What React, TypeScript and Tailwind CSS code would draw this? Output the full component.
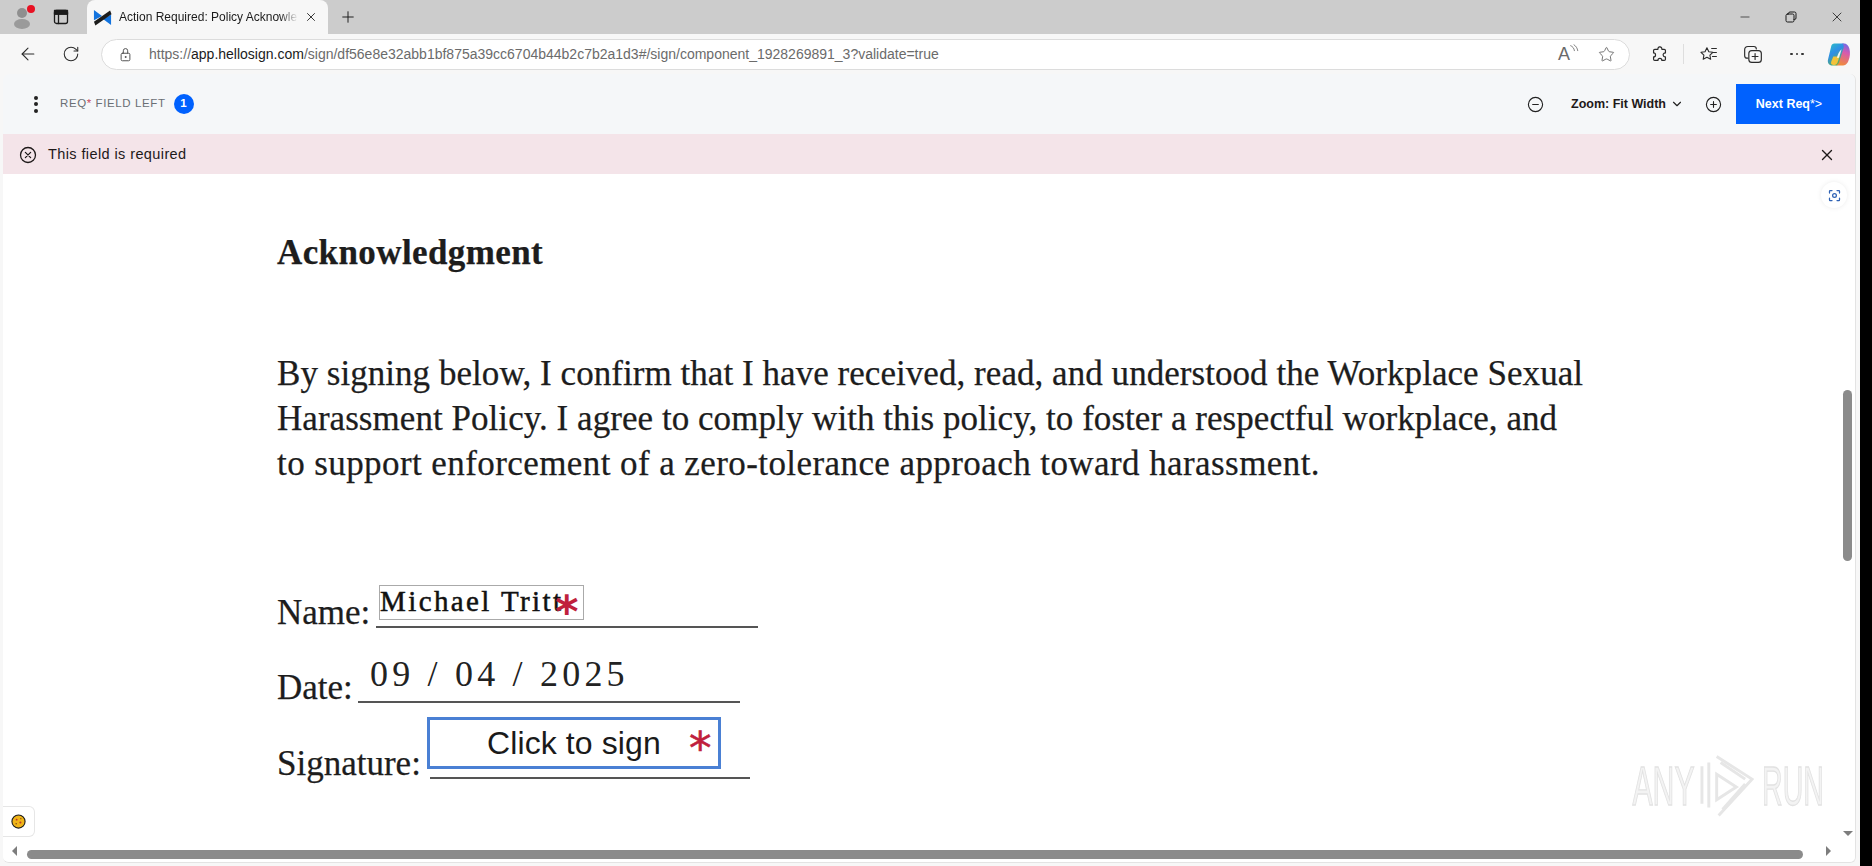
import React from "react";
import { ArrowLeft, RotateCw, X, Plus, ChevronDown, Star, Minus } from "lucide-react";

const Ic = ({ className = "", children, vb = "0 0 24 24", sw = 1.5 }: { className?: string; children: React.ReactNode; vb?: string; sw?: number }) => (
  <svg viewBox={vb} fill="none" stroke="currentColor" strokeWidth={sw} strokeLinecap="round" strokeLinejoin="round" className={className}>
    {children}
  </svg>
);

const Cambria = "font-['Liberation_Serif',serif]";

function TabStrip() {
  return (
    <div className="flex h-[34px] items-end bg-[#cccccc] font-['Liberation_Sans',sans-serif] text-[#1b1b1b]">
      <div className="relative flex h-[34px] w-[44px] shrink-0 items-center justify-center">
        <svg viewBox="0 0 24 24" className="h-[24px] w-[24px]">
          <circle cx="12" cy="8" r="5" fill="#8f8f8f" />
          <ellipse cx="12" cy="19" rx="8" ry="5" fill="#9a9a9a" />
        </svg>
        <span className="absolute left-[27px] top-[5px] h-[8px] w-[8px] rounded-full bg-[#e81123]" />
      </div>
      <div className="flex h-[34px] w-[43px] shrink-0 items-center justify-start pl-[9px]">
        <Ic className="h-[16px] w-[16px]" vb="0 0 16 16" sw={1.3}>
          <rect x="1.5" y="1.5" width="13" height="13" rx="2" />
          <path d="M1.5 5h13M5.5 5v9.5" />
          <path d="M1.5 1.5h13V5h-13z" fill="currentColor" />
        </Ic>
      </div>
      <div className="flex h-[34px] w-[241px] shrink-0 items-center rounded-t-[8px] bg-[#f7f7f7] pl-[6px] pr-[10px]">
        <svg viewBox="0 0 20 20" className="h-[19px] w-[19px] shrink-0">
          <path d="M1 2 L9.500 8.500 L1 13 Z" fill="#1273de" />
          <path d="M19 18 L10.500 11.500 L19 7 Z" fill="#1273de" />
          <path d="M1 14.500 L18 2.500 L19.500 6.500 L2.500 18.500 Z" fill="#1c1c1c" />
        </svg>
        <span className="ml-[7px] w-[179px] whitespace-nowrap text-[12px] leading-[14px] [mask-image:linear-gradient(to_right,#000_90%,transparent)]">
          Action Required: Policy Acknowle
        </span>
        <X className="ml-auto h-[14px] w-[14px]" strokeWidth={1.5} />
      </div>
      <div className="flex h-[34px] w-[40px] shrink-0 items-center justify-center">
        <Plus className="h-[18px] w-[18px]" strokeWidth={1.3} />
      </div>
      <div className="flex h-[34px] flex-1 items-center justify-end">
        <div className="flex h-full w-[46px] items-center justify-center"><Minus className="h-[14px] w-[14px]" strokeWidth={1.2} /></div>
        <div className="flex h-full w-[46px] items-center justify-center">
          <Ic className="h-[12px] w-[12px]" vb="0 0 12 12" sw={1}>
            <rect x="1" y="3" width="8" height="8" rx="1.5" />
            <path d="M3.5 3V2.5A1.5 1.5 0 0 1 5 1h4.5A1.5 1.5 0 0 1 11 2.5V7a1.5 1.5 0 0 1-1.5 1.5H9" />
          </Ic>
        </div>
        <div className="flex h-full w-[46px] items-center justify-center"><X className="h-[16px] w-[16px]" strokeWidth={1.2} /></div>
      </div>
    </div>
  );
}

function Toolbar() {
  return (
    <div className="flex h-[40px] items-center bg-[#f7f7f7] text-[#2b2b2b]">
      <div className="flex w-[101px] shrink-0 items-center pl-[18px]">
        <ArrowLeft className="h-[20px] w-[20px]" strokeWidth={1.3} />
        <RotateCw className="ml-[24px] h-[18px] w-[18px]" strokeWidth={1.4} />
      </div>
      <div className="flex h-[31px] w-[1529px] shrink-0 items-center rounded-full border border-[#dcdcdc] bg-white">
        <Ic className="ml-[16px] h-[15px] w-[15px] text-[#555]" sw={1.6}>
          <rect x="5" y="10" width="14" height="12" rx="2" />
          <path d="M8.5 10V6a3.5 3.5 0 0 1 7 0v4" />
          <circle cx="12" cy="16" r="0.8" fill="currentColor" />
        </Ic>
        <span className="ml-[16px] whitespace-nowrap font-['Liberation_Sans',sans-serif] text-[14px] text-[#6b6b6b]">
          https://<span className="text-[#1b1b1b]">app.hellosign.com</span>/sign/df56e8e32abb1bf875a39cc6704b44b2c7b2a1d3#/sign/component_1928269891_3?validate=true
        </span>
        <span className="ml-auto mr-[14px] flex items-center text-[#6a6a6a]">
          <span className="relative flex h-[20px] w-[22px] items-center font-['Liberation_Sans',sans-serif] text-[18px] leading-none">
            A
            <Ic className="absolute left-[11px] top-[0px] h-[10px] w-[10px]" sw={2}>
              <path d="M4 4c5 2 8 6 9 12M12 2c5 3 8 8 9 14" />
            </Ic>
          </span>
          <Star className="ml-[18px] h-[17px] w-[17px]" strokeWidth={1.3} />
        </span>
      </div>
      <div className="flex flex-1 items-center">
        <Ic className="ml-[20px] h-[19px] w-[19px]" sw={1.5}>
          <path d="M10 4.500a2.500 2.500 0 0 1 4.500-1.200c.5.8.5 1.200.5 2.200h3c1 0 1.500.5 1.500 1.500v3c-1 0-1.800.2-2.400 1a2.400 2.400 0 0 0 0 3c.6.8 1.400 1 2.400 1v3c0 1-.5 1.500-1.500 1.500h-3c0-1.200-.5-2.500-2.500-2.500s-2.500 1.300-2.500 2.500H6c-1 0-1.500-.5-1.500-1.500v-3c1.200 0 2.500-.5 2.500-2.500S5.700 10 4.500 10V7c0-1 .5-1.500 1.500-1.500h4z" />
        </Ic>
        <span className="ml-[14px] h-[20px] w-px bg-[#dedede]" />
        <Ic className="ml-[15px] h-[19px] w-[19px]" sw={1.4}>
          <path d="M10 3.500l2.400 5 5.100.7-3.700 3.600.9 5.200-4.700-2.500-4.700 2.500.9-5.200L2.500 9.200l5.100-.7z" />
          <path d="M16 4.500h6M18 9.500h4M17 14.500h5" />
        </Ic>
        <Ic className="ml-[25px] h-[20px] w-[20px]" sw={1.4}>
          <path d="M6 17H5a3 3 0 0 1-3-3V7a4 4 0 0 1 4-4h7a3 3 0 0 1 3 3" />
          <rect x="7" y="8" width="15" height="14" rx="3.500" />
          <path d="M14.500 11.500v7M11 15h7" />
        </Ic>
        <span className="ml-[27px] flex items-center gap-[3px]">
          <span className="h-[2.500px] w-[2.500px] rounded-full bg-[#333]" />
          <span className="h-[2.500px] w-[2.500px] rounded-full bg-[#333]" />
          <span className="h-[2.500px] w-[2.500px] rounded-full bg-[#333]" />
        </span>
        <svg viewBox="0 0 24 24" className="ml-[22px] h-[25px] w-[25px]">
          <defs>
            <linearGradient id="cpa" x1="0" y1="0" x2="0.6" y2="1"><stop offset="0" stopColor="#2cc4c0" /><stop offset="0.45" stopColor="#2f8ee8" /><stop offset="1" stopColor="#5fb548" /></linearGradient>
            <linearGradient id="cpb" x1="0.8" y1="0" x2="0.5" y2="1"><stop offset="0" stopColor="#6a6ce8" /><stop offset="0.4" stopColor="#d65ab0" /><stop offset="1" stopColor="#f08a3c" /></linearGradient>
          </defs>
          <path d="M8 1.500h8c2 0 3 1 3 2.500l-5 15c-.6 2-2 3.500-4 3.500H6c-3 0-5-2.500-4-6L5 4c.4-1.500 1.500-2.500 3-2.500z" fill="url(#cpa)" />
          <path d="M15 1.500h2c3 0 4.500 2 5.500 5 1 4 .5 8-.8 11-.8 2.500-2.500 5-5.200 5h-8c2 0 3.500-1 4-3l4.500-14c.5-2-.5-3.500-2-4z" fill="url(#cpb)" />
          <path d="M7 22c-2 0-2.500-1.500-2-3l2-5h6l-2 6c-.5 1.200-1.500 2-3 2z" fill="#f3c33a" />
          <path d="M10.500 15c.8-3 2-6 4.500-8l-2.500 8z" fill="#ffffff" opacity="0.9" />
        </svg>
      </div>
    </div>
  );
}

function AppBar() {
  return (
    <div className="flex h-[60px] items-center rounded-t-[6px] bg-[#f5f7f9] font-['Liberation_Sans',sans-serif]">
      <div className="ml-[31px] flex w-[4px] flex-col gap-[2.500px]">
        <span className="h-[4px] w-[4px] rounded-full bg-[#222]" />
        <span className="h-[4px] w-[4px] rounded-full bg-[#222]" />
        <span className="h-[4px] w-[4px] rounded-full bg-[#222]" />
      </div>
      <span className="ml-[22px] text-[11.500px] tracking-[0.6px] text-[#6a6f75]">
        REQ<span className="text-[#c7485f]">*</span> FIELD LEFT
      </span>
      <span className="ml-[8px] flex h-[20px] w-[20px] items-center justify-center rounded-full bg-[#0061fe] text-[11.500px] font-bold text-white">1</span>
      <div className="ml-auto flex items-center">
        <Ic className="h-[17px] w-[17px] text-[#222]" sw={1.6}>
          <circle cx="12" cy="12" r="10" />
          <path d="M8 12h8" />
        </Ic>
        <span className="ml-[27px] text-[12.500px] font-bold text-[#1e1919]">Zoom: Fit Width</span>
        <ChevronDown className="ml-[4px] h-[14px] w-[14px] text-[#222]" strokeWidth={2} />
        <Ic className="ml-[21px] h-[17px] w-[17px] text-[#222]" sw={1.6}>
          <circle cx="12" cy="12" r="10" />
          <path d="M8 12h8M12 8v8" />
        </Ic>
        <button className="ml-[14px] mr-[15px] flex h-[40px] w-[104px] items-center justify-center bg-[#0061fe] pl-[2px] text-[12.500px] font-bold text-white">
          Next Req<span className="font-normal">*&gt;</span>
        </button>
      </div>
    </div>
  );
}

function Alert() {
  return (
    <div className="flex h-[40px] items-center bg-[#f4e4e9] pl-[16px] pr-[19px] pt-[1px] font-['Liberation_Sans',sans-serif] text-[#1e1919]">
      <Ic className="h-[18px] w-[18px]" sw={1.7}>
        <circle cx="12" cy="12" r="10" />
        <path d="M8.500 8.500l7 7M15.500 8.500l-7 7" />
      </Ic>
      <span className="ml-[11px] text-[14.500px] tracking-[0.4px]">This field is required</span>
      <X className="ml-auto h-[18px] w-[18px]" strokeWidth={1.8} />
    </div>
  );
}

function DocumentPage() {
  return (
    <div className={`relative flex-1 overflow-hidden bg-white pl-[274px] pt-[58px] text-[#1d1d1d] ${Cambria} [-webkit-text-stroke:0.25px_#1d1d1d]`}>
      <h1 className="text-[35px] font-bold leading-[42px] tracking-[0.4px]">Acknowledgment</h1>
      <div className="mt-[77px] text-[35px] leading-[45px] tracking-[0.05px]">
        <p className="whitespace-nowrap">By signing below, I confirm that I have received, read, and understood the Workplace Sexual</p>
        <p className="whitespace-nowrap">Harassment Policy. I agree to comply with this policy, to foster a respectful workplace, and</p>
        <p className="whitespace-nowrap tracking-[0.42px]">to support enforcement of a zero-tolerance approach toward harassment.</p>
      </div>

      <div className="mt-[108px] text-[35px] leading-[38px]">
        <div className="flex items-end">
          <span>Name:</span>
          <span className="mb-[4px] ml-[6px] h-[2px] w-[382px] bg-[#555]" />
        </div>
        <div className="mt-[37px] flex items-end">
          <span>Date:</span>
          <span className="mb-[4px] ml-[5px] h-[2px] w-[382px] bg-[#555]" />
        </div>
        <div className="mt-[38px] flex items-end">
          <span>Signature:</span>
          <span className="mb-[4px] ml-[9px] h-[2px] w-[320px] bg-[#555]" />
        </div>
      </div>

      {/* form fields placed over the document */}
      <div className="absolute left-[376px] top-[411px] flex h-[35px] w-[205px] items-center border border-[#aaa] pb-[2px] font-['Liberation_Serif',serif] text-[29px] leading-none tracking-[2.400px] text-[#111] [-webkit-text-stroke:0.5px_#111]">
        Michael Tritt
      </div>
      <span className="absolute left-[552px] top-[415px] font-['DejaVu_Sans',sans-serif] text-[45px] font-bold leading-[45px] text-[#c01f3d] [-webkit-text-stroke:0px]">*</span>
      <div className="absolute left-[367px] top-[478px] whitespace-nowrap font-['Liberation_Serif',serif] text-[36px] leading-[44px] tracking-[4.200px] text-[#222] [-webkit-text-stroke:0px]">
        09 / 04 / 2025
      </div>
      <div className="absolute left-[424px] top-[543px] flex h-[52px] w-[294px] items-center border-[3px] border-[#4a80d4] bg-white pl-[57px] font-['Liberation_Sans',sans-serif] text-[32px] leading-none tracking-[0.1px] text-[#1a1a1a] [-webkit-text-stroke:0px]">
        Click to sign
      </div>
      <span className="absolute left-[686px] top-[552px] font-['DejaVu_Sans',sans-serif] text-[45px] leading-[45px] text-[#c01f3d] [-webkit-text-stroke:0.6px_#c01f3d]">*</span>

      {/* floating UI */}
      <div className="absolute right-[8px] top-[8px] flex h-[26px] w-[26px] items-center justify-center rounded-full bg-white shadow-[0_0_5px_rgba(0,0,0,0.08)]">
        <Ic className="h-[15px] w-[15px] text-[#2f62b5]" sw={2}>
          <path d="M4 8V5a1 1 0 0 1 1-1h3M16 4h3a1 1 0 0 1 1 1v3M20 16v3a1 1 0 0 1-1 1h-3M8 20H5a1 1 0 0 1-1-1v-3" />
          <circle cx="12" cy="12" r="3" />
        </Ic>
      </div>
      <div className="absolute bottom-[25px] left-0 flex h-[31px] w-[32px] items-center justify-center rounded-r-[6px] border border-l-0 border-[#e6e6e6] bg-white">
        <svg viewBox="0 0 16 16" className="h-[15px] w-[15px]">
          <circle cx="8" cy="8" r="7" fill="#f0b417" stroke="#1c1c1c" strokeWidth="1.200" />
          <circle cx="6" cy="6" r="1" fill="#c0392b" />
          <circle cx="10" cy="9" r="1.100" fill="#c0392b" />
          <circle cx="5.500" cy="10.500" r="0.800" fill="#7a4a10" />
          <circle cx="10.500" cy="5" r="0.700" fill="#7a4a10" />
        </svg>
      </div>

      {/* watermark */}
      <div className="absolute bottom-[44px] right-[33px] flex items-center font-['Liberation_Sans',sans-serif] text-[42px] leading-none text-[#f3f3f3] [-webkit-text-stroke:1px_#e2e2e2]">
        <span className="flex w-[65px] scale-x-[0.72] scale-y-[1.33] justify-center whitespace-nowrap">ANY</span>
        <svg viewBox="0 0 56 64" className="ml-[3px] mr-[10px] h-[64px] w-[55px]" fill="none" stroke="#e6e6e6" strokeWidth="3">
          <path d="M18 2 L54 25 L20 62" />
          <path d="M3 12v38M10 8v46" />
          <path d="M18 20 L38 33 L18 46 Z" />
          <path d="M22 8 L47 25 M24 56 L47 30" />
        </svg>
        <span className="flex w-[58px] scale-x-[0.68] scale-y-[1.33] justify-center whitespace-nowrap">RUN</span>
      </div>

      {/* scrollbars */}
      <div className="absolute right-[3px] top-[216px] h-[171px] w-[9px] rounded-full bg-[#8b8b8b]" />
      <span className="absolute bottom-[26px] right-[2px] h-0 w-0 border-x-[5px] border-t-[5px] border-x-transparent border-t-[#7d7d7d]" />
      <span className="absolute bottom-[6px] left-[9px] h-0 w-0 border-y-[5px] border-r-[5px] border-y-transparent border-r-[#7d7d7d]" />
      <span className="absolute bottom-[6px] right-[24px] h-0 w-0 border-y-[5px] border-l-[5px] border-y-transparent border-l-[#7d7d7d]" />
      <div className="absolute bottom-[3px] left-[24px] h-[9px] w-[1776px] rounded-full bg-[#8b8b8b]" />
    </div>
  );
}

export default function App() {
  return (
    <div className="flex h-[866px] w-[1872px] overflow-hidden bg-black">
      <div className="flex w-[1860px] shrink-0 flex-col bg-[#f7f7f7]">
        <TabStrip />
        <Toolbar />
        <div className="flex min-h-0 flex-1 flex-col pb-[3px] pl-[3px] pr-[4px]">
          <div className="flex min-h-0 flex-1 flex-col overflow-hidden rounded-[6px] border-b border-r border-[#e3e3e3]">
            <AppBar />
            <Alert />
            <DocumentPage />
          </div>
        </div>
      </div>
    </div>
  );
}
